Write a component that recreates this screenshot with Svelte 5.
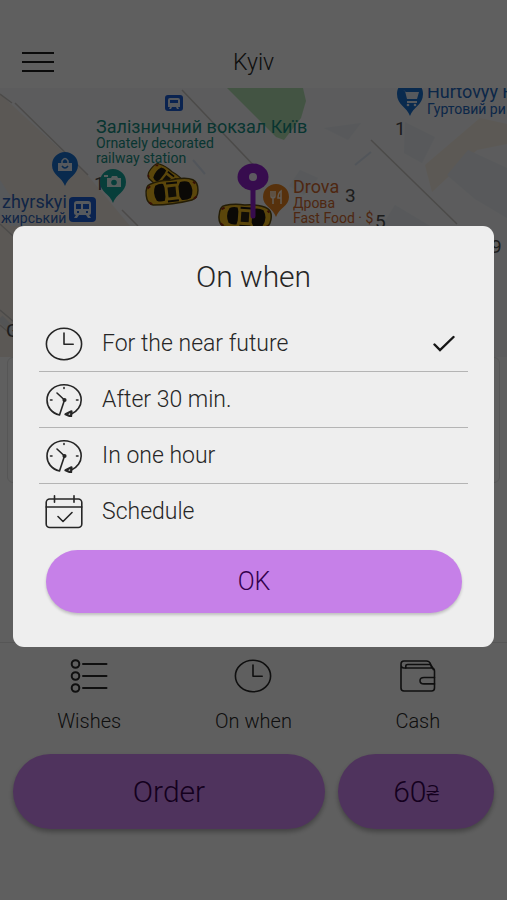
<script>
  const options = [
    { id: 'near', label: 'For the near future', icon: 'clock' },
    { id: 'half', label: 'After 30 min.', icon: 'later' },
    { id: 'hour', label: 'In one hour', icon: 'later' },
    { id: 'plan', label: 'Schedule', icon: 'calendar' }
  ];
  const tabs = [
    { label: 'Wishes', icon: 'list' },
    { label: 'On when', icon: 'clock' },
    { label: 'Cash', icon: 'wallet' }
  ];
  let selected = $state('near');
</script>

{#snippet icon(name)}
  <svg class="icon" viewBox="0 0 38 34" aria-hidden="true">
    {#if name === 'clock'}
      <ellipse cx="19" cy="17" rx="17.6" ry="15.7" />
      <path d="M19 6v11.2h9.2" />
    {:else if name === 'later'}
      <path d="M14.5 32C6.5 30 2 24 2 17 2 8.500 9.500 1.800 19 1.800S36.200 8.500 36.200 17c0 6-4 11.500-9.800 14M14.500 32l5-15-7.500-7" />
      <circle cx="19.500" cy="17" r="1.300" />
      <path d="M20.500 31.300l6-3-.5 5.300z" stroke-width="2.200" />
      <path d="M19 4.500v1M5.500 17h1.500M31.500 17h1.500" />
    {:else if name === 'calendar'}
      <rect x="1.200" y="4" width="35.600" height="28.500" rx="3.500" />
      <path d="M1.200 12h35.600M9.500.8v6.500M29 .8v6.500M13 21.500l5 5 9-9" />
    {:else if name === 'list'}
      <circle class="bold" cx="5.500" cy="5" r="3.800" />
      <circle class="bold" cx="5.500" cy="17" r="3.800" />
      <circle class="bold" cx="5.500" cy="29" r="3.800" />
      <path class="bold" d="M13 5h23.500M13 17h23.500M13 29h23.500" />
    {:else}
      <path d="M2 5.500v23.500q0 3 3 3h27.500q3 0 3-3V12q0-3-3-3H5Q2 9 2 5.500 2 2 5 2h22.500q3 0 4 3l1.300 4" />
      <path d="M6.800 9V7q0-1.500 2-1.500h21.500q2.500 0 4 5M35.500 18.500H25q-4 0-4 3.200t4 3.200h10.500" />
    {/if}
  </svg>
{/snippet}

<div class="page">
  <header>
    <button class="menu" aria-label="Menu">
      <svg viewBox="0 0 32 22" aria-hidden="true"><path d="M0 2h32M0 11h32M0 20h32" /></svg>
    </button>
    <h1>Kyiv</h1>
    <span></span>
  </header>

  <svg class="map" viewBox="0 88 507 269" preserveAspectRatio="xMidYMid slice" role="img" aria-label="Map of Kyiv">
    <rect y="88" width="507" height="269" fill="#e5e6e8" />
    <path d="M0 94L85 172 130 226 170 357H0z" fill="#e3dcd5" />
    <path d="M0 180L30 226H10L0 215z" fill="#dadee4" />
    <path d="M0 94l12 9M15 103l73 72M182 90l78 82M122 210l16 16M0 224l24 22M0 310l40 34M0 325l24 20" class="road" />
    <path d="M0 318l30 30" stroke="#cfd1d4" stroke-width="7" />
    <path d="M227 88h76l3 13-5 17-17 22-8-3z" fill="#a9d3a8" />
    <path d="M425 165L480 118l27 6v20l-30 6-45 42z" fill="#e6dfd4" />
    <path d="M405 122l30 15-13 26-18-10zM468 150l39 18v50l-32-19-28-24zM324 128l37-5-13 17zM300 170l18 8-14 17-15-9zM395 205l35 21h-48z" fill="#dbdfe4" />
    <path d="M371 140l86 84" class="road" />
    <path d="M355 165l16-13M193 160l12 14" stroke="#ccd5e1" stroke-width="2" />

    <g fill="#1769c4">
      <path d="M65 186c-3-9-13-11-13-21a13 13 0 0 1 26 0c0 10-10 12-13 21z" />
      <path d="M410 116c-3-9-13-11-13-22 0-17 26-17 26 0 0 11-10 13-13 22z" />
      <rect x="165" y="95" width="18" height="16" rx="3" fill="#1a58c8" />
      <rect x="69" y="197" width="27" height="25" rx="4" fill="#1a58c8" />
    </g>
    <g fill="#d8dfe8">
      <path d="M58 163h14v8H58z" />
      <path d="M62 164v-3q3-5 6 0v3" fill="none" stroke="#d8dfe8" stroke-width="1.500" />
      <path d="M62 166q3 4 6 0" fill="none" stroke="#1769c4" stroke-width="1.500" />
      <path d="M170 98h8q2 0 2 2v7h-2l1 2h-2l-1-2h-4l-1 2h-2l1-2h-2v-7q0-2 2-2z" />
      <path d="M170 100h8v3h-8z" fill="#1a58c8" />
      <path d="M77 201h11q3 0 3 3v9q0 2-2 2l2 3h-3l-2-3h-7l-2 3h-3l2-3q-2 0-2-2v-9q0-3 3-3z" />
      <path d="M76 204h5v5h-5zM83 204h6v5h-6zM77 211h2v2h-2zM86 211h2v2h-2z" fill="#1a58c8" />
      <path d="M403 90l2 1 2 8h10l2-7h-13M407 101h10v2h-10z" />
      <circle cx="408" cy="105" r="1.300" /><circle cx="415" cy="105" r="1.300" />
    </g>
    <text x="94" y="190" class="house">1</text>
    <path d="M113 203c-3-9-13-11-13-21a13 13 0 0 1 26 0c0 10-10 12-13 21z" fill="#129c92" />
    <path d="M107 178h4l1-2h5l1 2h3v9h-14zM104 175h4v2h-4z" fill="#d8e8e6" />
    <circle cx="114" cy="182.500" r="2.800" fill="#129c92" />
    <path d="M276 217c-3-9-13-11-13-20a13 13 0 0 1 26 0c0 9-10 11-13 20z" fill="#d97c1e" />
    <path d="M271 191v5q0 2 2 2v6M273 191v7M275 191v5q0 2-2 2M281 204v-13q-3 2-3 7h3" fill="none" stroke="#f0e4d6" stroke-width="1.500" />

    <text x="96" y="133" class="place big" fill="#16857a">Залізничний вокзал Київ</text>
    <text x="96" y="148" class="place" fill="#16857a">Ornately decorated</text>
    <text x="96" y="163" class="place" fill="#16857a">railway station</text>
    <text x="2" y="208" class="place big" fill="#2b5cae">zhyrskyi</text>
    <text x="1" y="223" class="place" fill="#2b5cae">жирський</text>
    <text x="427" y="98" class="place big" fill="#1c61b4">Hurtovyy R</text>
    <text x="427" y="114" class="place" fill="#1c61b4">Гуртовий ри</text>
    <text x="293" y="193" class="place big" fill="#c4622c">Drova</text>
    <text x="293" y="208" class="place" fill="#c4622c">Дрова</text>
    <text x="293" y="223" class="place" fill="#c4622c">Fast Food · $</text>
    <g class="house">
      <text x="395" y="135">1</text>
      <text x="345" y="202">3</text>
      <text x="375" y="228">5</text>
      <text x="491" y="253">9</text>
      <text x="6" y="337">G</text>
    </g>

    {#snippet taxi()}
      <path d="M-26 1q0-10 5-11 9-3 20-2 16-2 23 2 5 3 4 11-1 8-7 9-20 3-39 1-6-2-6-10z" fill="#e3b01c" stroke="#5a470d" stroke-width="1.500" />
      <path d="M-16-8q4-2 8-1l1 4v9l-1 4q-5 1-8-1-4-8 0-15zM9-9q5-1 9 1 5 8 0 16-4 2-9 1l-2-4V-5z" fill="#1d1810" />
      <path d="M-5-9H6M-5 9H6" stroke="#1d1810" stroke-width="2" />
      <path d="M-4-5h8v10h-8z" fill="#2a2212" />
      <path d="M-24-6l3-2M-24 8l3 2M24-6l-2-2M24 7l-3 2" stroke="#8a2a14" stroke-width="2" />
    {/snippet}
    <g transform="translate(166 180) rotate(38) scale(.72 .85)">{@render taxi()}</g>
    <g transform="translate(172 192) rotate(-6)">{@render taxi()}</g>
    <g transform="translate(245 217) rotate(4)">{@render taxi()}</g>
    <path d="M253 184v32" stroke="#8a1fc4" stroke-width="5" stroke-linecap="round" />
    <ellipse cx="253" cy="177" rx="15.500" ry="13.500" fill="#8a1fc4" />
    <circle cx="253" cy="177" r="4" fill="#e8dff0" />
  </svg>

  <section class="route" aria-label="Route"></section>

  <footer>
    <nav>
      {#each tabs as tab}
        <button class="tab">{@render icon(tab.icon)}<span>{tab.label}</span></button>
      {/each}
    </nav>
    <div class="actions">
      <button class="pill order">Order</button>
      <button class="pill price">60<span class="currency">₴</span></button>
    </div>
  </footer>
</div>

<div class="scrim">
  <div class="dialog" role="dialog" aria-modal="true" aria-labelledby="dialog-title">
    <h2 id="dialog-title">On when</h2>
    <div class="options" role="radiogroup" aria-labelledby="dialog-title">
      {#each options as option}
        <label for={option.id}>
          {@render icon(option.icon)}
          <span>{option.label}</span>
          <input type="radio" id={option.id} name="when" value={option.id} bind:group={selected} />
          {#if selected === option.id}
            <svg class="check" viewBox="0 0 22 18" aria-hidden="true"><path d="M1.500 9.500l5.500 5.500L20.500 2" /></svg>
          {/if}
        </label>
      {/each}
    </div>
    <button class="pill ok">OK</button>
  </div>
</div>

<style>
  :global(body) {
    margin: 0;
    background: #eeeeee;
  }
  .page,
  .scrim {
    font-family: Roboto, 'Noto Sans', sans-serif;
    font-weight: 300;
    color: #262626;
  }
  .page {
    display: flex;
    flex-direction: column;
    min-height: 100vh;
    background: #eeeeee;
  }
  button {
    border: 0;
    padding: 0;
    background: none;
    font: inherit;
    color: inherit;
  }
  h1,
  h2 {
    margin: 0;
    font-weight: 300;
    text-align: center;
  }
  header {
    display: grid;
    grid-template-columns: 32px 1fr 32px;
    align-items: center;
    height: 52px;
    padding: 36px 22px 0;
  }
  h1 {
    font-size: 23px;
  }
  .menu svg {
    display: block;
    width: 32px;
    height: 22px;
    stroke: #1c1c1c;
    stroke-width: 2;
  }
  .map {
    display: block;
    width: 100%;
    height: 269px;
  }
  .road {
    fill: none;
    stroke: #bdbab6;
    stroke-width: 1.5;
  }
  .place {
    font-size: 14px;
    font-weight: 400;
  }
  .big {
    font-size: 18px;
  }
  .house {
    font-size: 19px;
    font-weight: 400;
    fill: #4a4a4a;
  }
  .route {
    height: 124px;
    margin: 0 7px;
    border: 1px solid #d6d6d6;
    border-radius: 6px;
  }
  footer {
    margin-top: auto;
    padding-bottom: 71px;
    border-top: 1px solid #d6d6d6;
  }
  nav {
    display: grid;
    grid-template-columns: repeat(3, 1fr);
    padding: 16px 7px 21px;
  }
  .tab {
    display: flex;
    flex-direction: column;
    align-items: center;
    gap: 16px;
    font-size: 20px;
    line-height: 24px;
  }
  .icon {
    flex: none;
    width: 38px;
    height: 34px;
    fill: none;
    stroke: #262626;
    stroke-width: 1.6;
    stroke-linecap: round;
    stroke-linejoin: round;
  }
  .bold {
    stroke-width: 2;
  }
  .actions {
    display: grid;
    grid-template-columns: 2fr 1fr;
    gap: 13px;
    padding: 0 13px;
  }
  .pill {
    border-radius: 40px;
    background: #c680e8;
    color: #33004d;
    box-shadow: 0 3px 5px rgba(0, 0, 0, 0.3);
  }
  .order,
  .price {
    height: 75px;
    font-size: 30px;
  }
  .currency {
    font-size: 23px;
  }
  .scrim {
    position: fixed;
    inset: 0;
    display: flex;
    align-items: center;
    padding: 0 13px 27px;
    background: rgba(0, 0, 0, 0.6);
  }
  .dialog {
    flex: 1;
    padding: 31px 26px 34px;
    border-radius: 11px;
    background: #eeeeee;
  }
  h2 {
    margin-bottom: 19px;
    font-size: 30px;
    line-height: 40px;
  }
  label {
    display: flex;
    align-items: center;
    gap: 19px;
    height: 55px;
    padding: 0 13px 0 6px;
    border-bottom: 1px solid #b4b4b4;
    font-size: 23px;
  }
  label:last-child {
    border-bottom: 0;
  }
  label span {
    flex: 1;
  }
  input {
    appearance: none;
    width: 0;
    height: 0;
    margin: 0;
  }
  .check {
    width: 22px;
    height: 18px;
    fill: none;
    stroke: #161616;
    stroke-width: 2.4;
    stroke-linecap: round;
  }
  .ok {
    display: block;
    width: calc(100% - 13px);
    height: 63px;
    margin: 11px 7px 0;
    font-size: 25px;
    box-shadow: 0 2px 3px rgba(0, 0, 0, 0.2);
  }
</style>
